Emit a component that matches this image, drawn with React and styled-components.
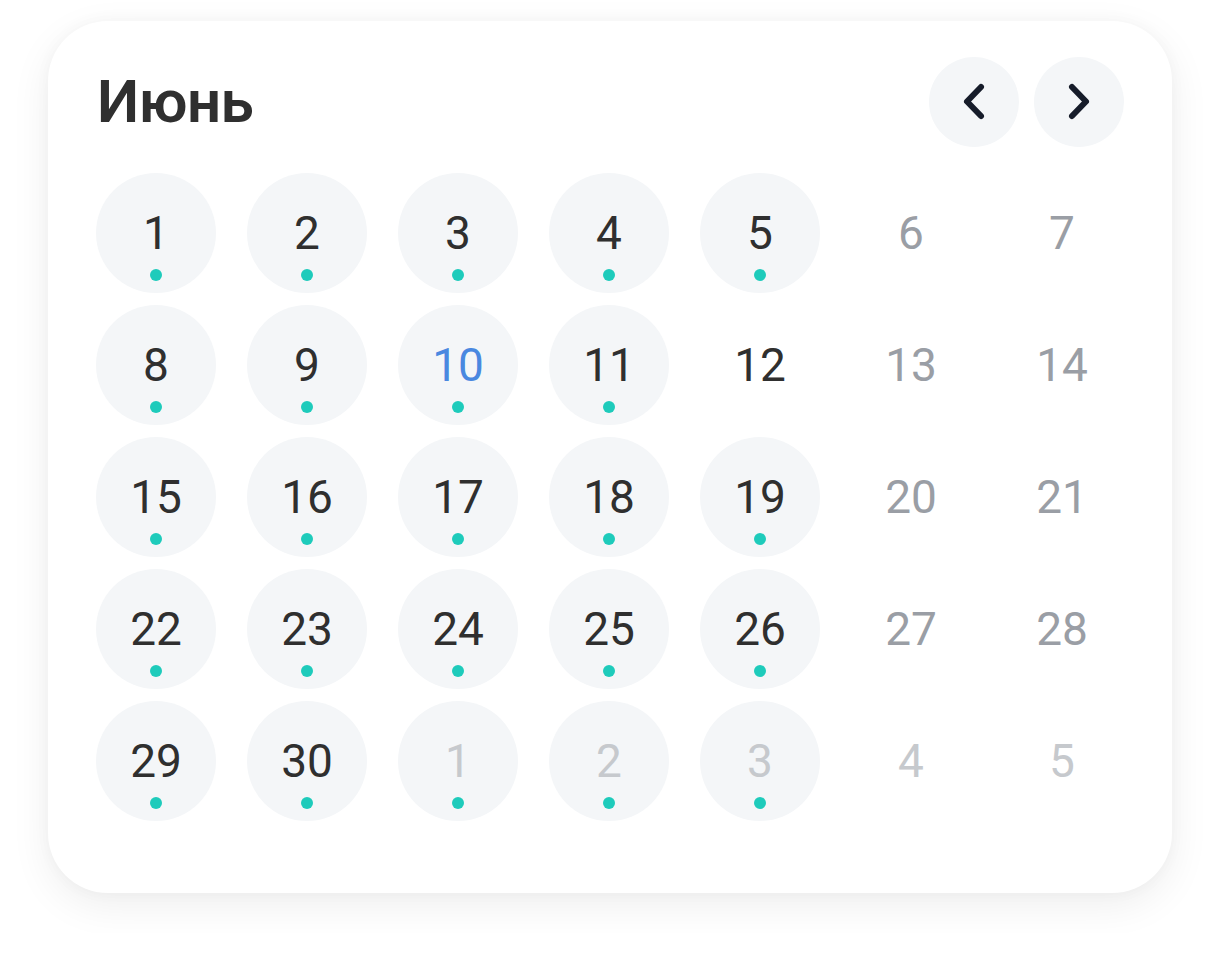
import React from "react";
import styled, { createGlobalStyle } from "styled-components";

const GlobalStyle = createGlobalStyle`
  html, body {
    margin: 0;
    padding: 0;
    background: #ffffff;
    font-family: Roboto, "Noto Sans", Arial, sans-serif;
  }
`;

const Page = styled.div`
  padding: 21px 48px 40px 48px;
`;

const Card = styled.div`
  width: 1124px;
  box-sizing: border-box;
  background: #ffffff;
  border-radius: 60px;
  padding: 36px 48px 72px 48px;
  box-shadow: 0 12px 40px rgba(0, 0, 0, 0.07), 0 0 16px rgba(0, 0, 0, 0.03);
`;

const Header = styled.div`
  display: flex;
  align-items: center;
  justify-content: space-between;
  height: 90px;
  margin-bottom: 26px;
`;

const Title = styled.h1`
  margin: 0 0 0 1px;
  font-size: 60px;
  font-weight: 600;
  color: #2f2f2f;
  letter-spacing: -0.5px;
  line-height: 1;
`;

const Nav = styled.div`
  display: flex;
  gap: 15px;
`;

const NavButton = styled.button`
  width: 90px;
  height: 90px;
  border: none;
  border-radius: 50%;
  background: #f4f6f8;
  display: flex;
  align-items: center;
  justify-content: center;
  padding: 0;
  cursor: pointer;
`;

const Grid = styled.div`
  display: grid;
  grid-template-columns: repeat(7, 120px);
  column-gap: 31px;
  row-gap: 12px;
`;

const colors = {
  normal: "#2f2f2f",
  weekend: "#9a9ea5",
  today: "#4a88e0",
  other: "#c6c9cd",
};

const Day = styled.div`
  position: relative;
  width: 120px;
  height: 120px;
  border-radius: 50%;
  background: ${(p) => (p.$filled ? "#f4f6f8" : "transparent")};
  display: flex;
  align-items: center;
  justify-content: center;
  font-size: 46px;
  font-weight: 400;
  color: ${(p) => colors[p.$tone]};
`;

const Dot = styled.span`
  position: absolute;
  left: 54px;
  top: 96px;
  width: 12px;
  height: 12px;
  border-radius: 50%;
  background: #1ecbbb;
`;

const Chevron = ({ dir }) => (
  <svg width="40" height="40" viewBox="0 0 40 40" fill="none">
    <path
      d={dir === "left" ? "M27 5 L13 19.5 L27 34" : "M13 5 L27 19.5 L13 34"}
      stroke="#161c2a"
      strokeWidth="6"
      strokeLinecap="round"
      strokeLinejoin="round"
    />
  </svg>
);

const buildDays = () => {
  const days = [];
  for (let d = 1; d <= 30; d++) {
    const col = (d - 1) % 7;
    const weekend = col >= 5;
    let tone = weekend ? "weekend" : "normal";
    if (d === 10) tone = "today";
    const filled = !weekend && d !== 12;
    days.push({ key: `c${d}`, label: d, tone, filled, dot: filled });
  }
  for (let d = 1; d <= 5; d++) {
    const filled = d <= 3;
    days.push({ key: `n${d}`, label: d, tone: "other", filled, dot: filled });
  }
  return days;
};

export default function App() {
  const days = buildDays();
  return (
    <Page>
      <GlobalStyle />
      <Card>
        <Header>
          <Title>Июнь</Title>
          <Nav>
            <NavButton aria-label="Предыдущий месяц">
              <Chevron dir="left" />
            </NavButton>
            <NavButton aria-label="Следующий месяц">
              <Chevron dir="right" />
            </NavButton>
          </Nav>
        </Header>
        <Grid>
          {days.map((d) => (
            <Day key={d.key} $filled={d.filled} $tone={d.tone}>
              {d.label}
              {d.dot && <Dot />}
            </Day>
          ))}
        </Grid>
      </Card>
    </Page>
  );
}
